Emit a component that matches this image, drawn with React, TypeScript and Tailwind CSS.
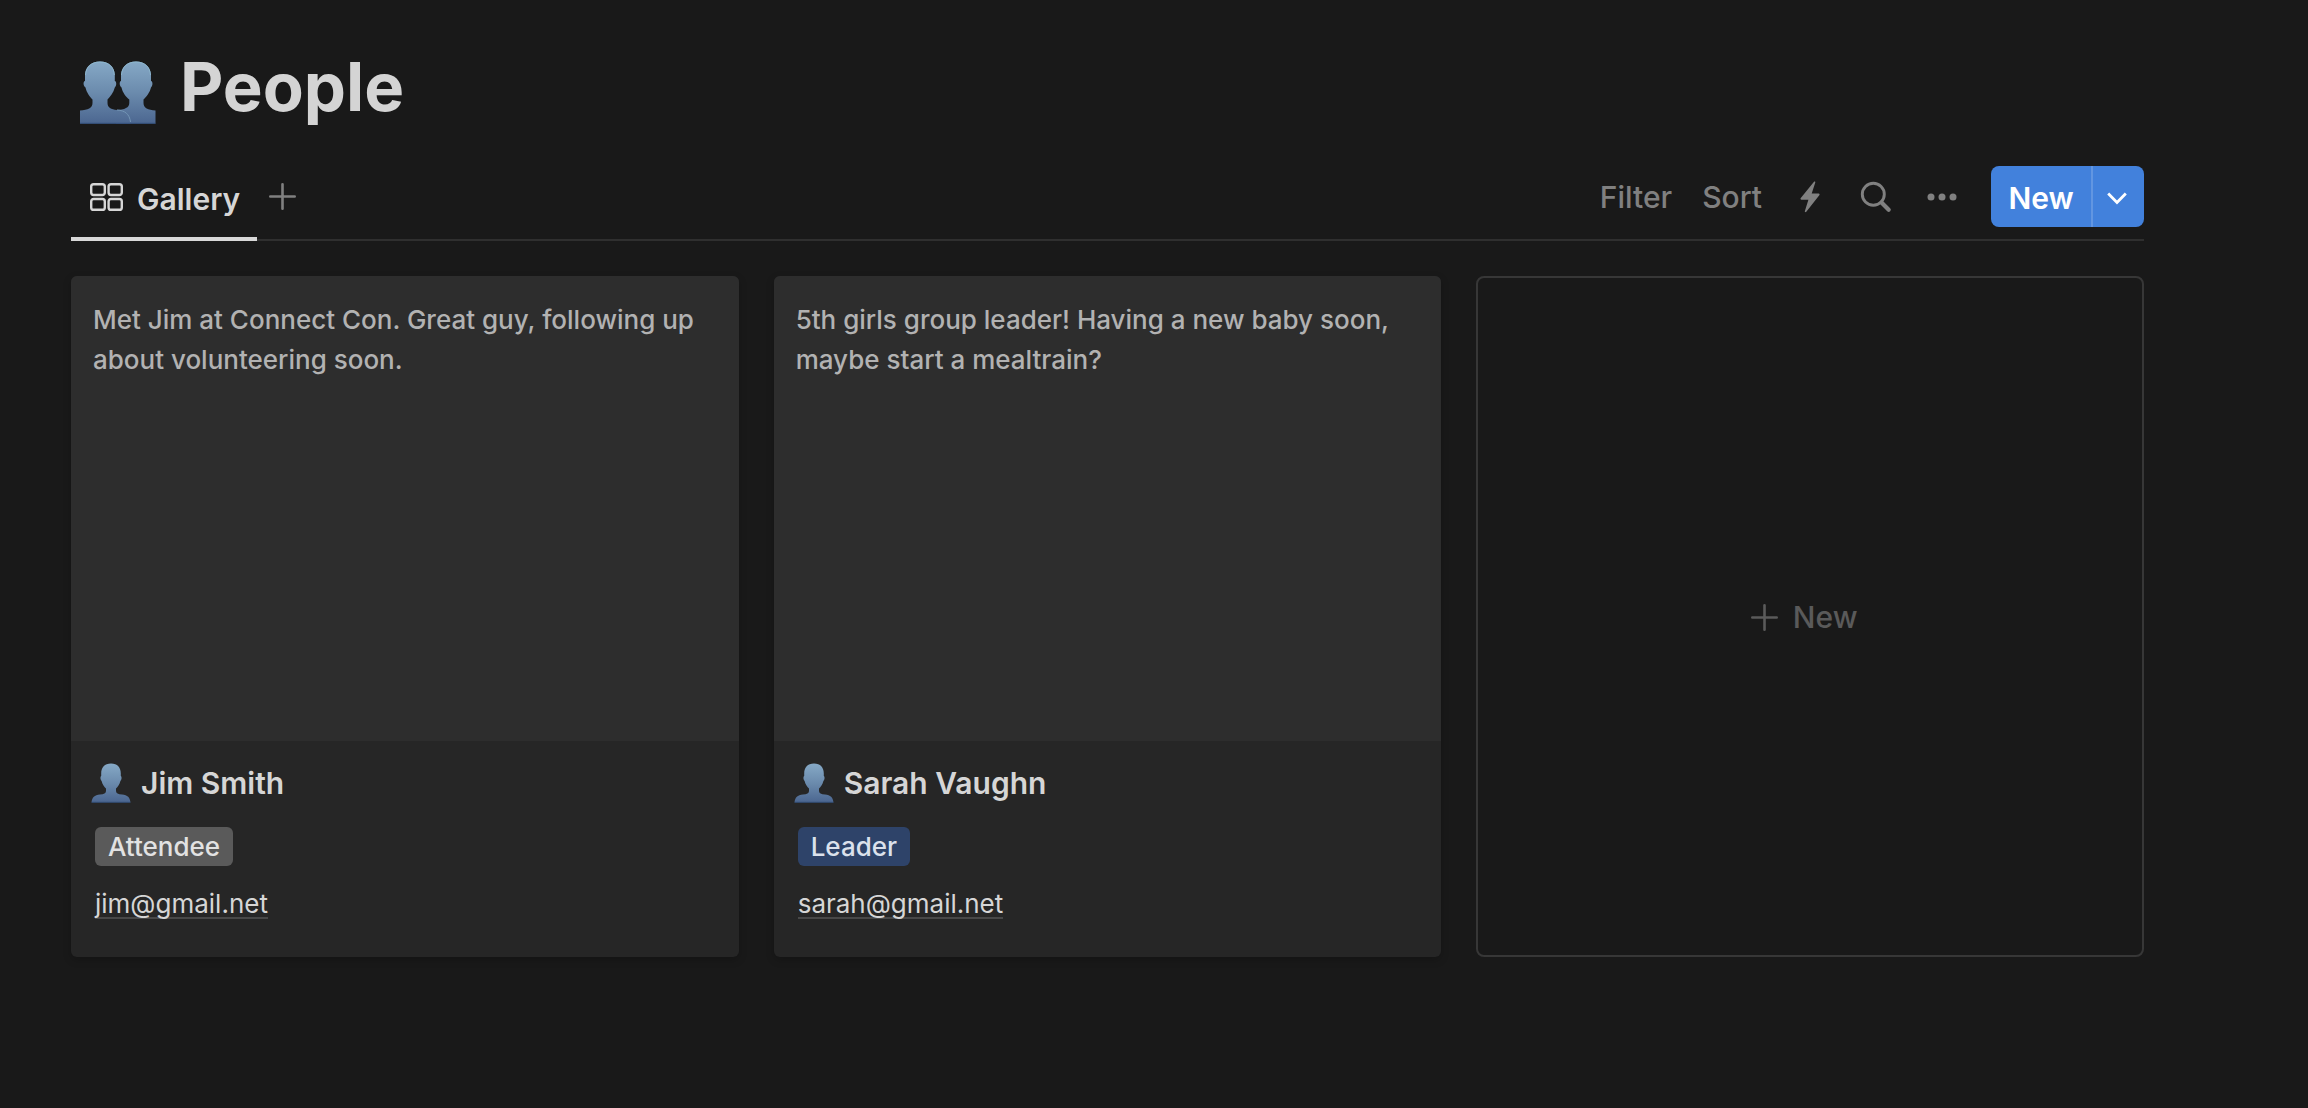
import React from "react";

function PersonIcon() {
  return (
    <svg viewBox="0 0 40 40" className="h-10 w-10 shrink-0" aria-hidden="true">
      <defs>
        <linearGradient id="person" x1="0" y1="0" x2="0" y2="1">
          <stop offset="0" stopColor="#86a9c6" />
          <stop offset="0.5" stopColor="#6b8bad" />
          <stop offset="1" stopColor="#4b6690" />
        </linearGradient>
      </defs>
      <path
        d="M20 0.500 C26.500 0.500 29.800 4.500 29.800 10.500 L29.800 13 C31 13.500 30.800 16.500 29.400 18 C28.600 21.500 26.600 24 25 25.500 L25 28 C25 30.500 27 31.300 31 31.600 C36.500 32.200 39 34.500 39.500 39.500 L0.500 39.500 C1 34.500 3.500 32.200 9 31.600 C13 31.300 15 30.500 15 28 L15 25.500 C13.400 24 11.400 21.500 10.600 18 C9.200 16.500 9 13.500 10.200 13 L10.200 10.500 C10.200 4.500 13.500 0.500 20 0.500 Z"
        fill="url(#person)"
      />
      <path d="M0.700 39.300 H39.300" stroke="#2f4a74" strokeWidth="0.800" />
    </svg>
  );
}

function PeopleIcon() {
  const left =
    "M20 0.500 C29 0.500 34.500 6 34.800 14 L34.800 20 C37 20.500 36.500 25 34.800 26.500 C33.500 31.500 30 36 27.500 38.500 L27.500 42 C27.500 46.500 31 48.500 37 49 C45 49.500 49.500 54 50.500 62.500 L0 62.500 L0 49.500 C8 49 12.500 47 12.500 42 L12.500 38.500 C10 36 6.500 31.500 5.500 26.500 C3.300 25 2.800 20.500 5 20 L5 14 C5.300 6 11 0.500 20 0.500 Z";
  const right =
    "M56 0.500 C65 0.500 70.500 6 71 14 L71 20 C73.200 20.500 72.700 25 71 26.500 C69.800 31.500 66.300 36 63.500 38.500 L63.500 42 C63.500 47 68 49 75.500 49.500 L75.500 62.500 L36 62.500 L36 49 C45 48.800 49.300 46.500 49.300 42 L49.300 38.500 C46 36 42.500 31.500 41.500 26.500 C39.500 25 39 20.500 41 20 L41 14 C41.500 6 47 0.500 56 0.500 Z";
  return (
    <svg viewBox="0 0 76 63" className="h-[63px] w-[76px] shrink-0" aria-hidden="true">
      <defs>
        <linearGradient id="people" gradientUnits="userSpaceOnUse" x1="0" y1="0" x2="0" y2="63">
          <stop offset="0" stopColor="#86a9c6" />
          <stop offset="0.5" stopColor="#6b8bad" />
          <stop offset="1" stopColor="#4b6690" />
        </linearGradient>
      </defs>
      <path d={right} fill="url(#people)" />
      <path d={left} fill="url(#people)" />
      <path d="M37 49 C45 49.500 49.500 53 50.500 61" fill="none" stroke="#7395b5" strokeWidth="1" />
      <path d="M0 62.300 H75.500" stroke="#35527e" strokeWidth="1" />
      <path
        d="M5.500 14 C6 6 11 1 20 1 C29 1 34 6 34.300 14 M41.500 14 C42 6 47 1 56 1 C65 1 70 6 70.500 14"
        fill="none"
        stroke="#8fb9cf"
        strokeWidth="0.900"
      />
    </svg>
  );
}

function GalleryIcon() {
  return (
    <svg viewBox="0 0 33 28" className="h-7 w-[33px]" fill="none" stroke="currentColor" strokeWidth="2.400" aria-hidden="true">
      <rect x="1.200" y="1.200" width="13.600" height="10.800" rx="2.400" />
      <rect x="18.600" y="1.200" width="13.200" height="10.800" rx="2.400" />
      <rect x="1.200" y="16" width="13.600" height="10.800" rx="2.400" />
      <rect x="18.600" y="16" width="13.200" height="10.800" rx="2.400" />
    </svg>
  );
}

function PlusIcon() {
  return (
    <svg viewBox="0 0 27 27" className="h-[27px] w-[27px]" fill="none" stroke="currentColor" strokeWidth="2.600" strokeLinecap="round" aria-hidden="true">
      <path d="M13.500 1.300 V25.700 M1.300 13.500 H25.700" />
    </svg>
  );
}

type Person = {
  name: string;
  note: string;
  role: string;
  tag: string;
  email: string;
};

const people: Person[] = [
  {
    name: "Jim Smith",
    note: "Met Jim at Connect Con. Great guy, following up about volunteering soon.",
    role: "Attendee",
    tag: "bg-[#5a5a5a] text-[#e2e2e2]",
    email: "jim@gmail.net",
  },
  {
    name: "Sarah Vaughn",
    note: "5th girls group leader! Having a new baby soon, maybe start a mealtrain?",
    role: "Leader",
    tag: "bg-[#2e4369] text-[#dbe1ec]",
    email: "sarah@gmail.net",
  },
];

function PersonCard({ person }: { person: Person }) {
  return (
    <article className="flex flex-col overflow-hidden rounded-md bg-[#262626] shadow-[0_3px_8px_rgba(0,0,0,0.2)]">
      <p className="h-[465px] bg-[#2d2d2d] px-[22px] pt-6 text-[26px] leading-10 font-medium text-[#b2b2b2]">{person.note}</p>
      <div className="px-6 pt-[22px] pb-[31px]">
        <h2 className="-ml-1 flex h-10 items-center gap-2.5 text-[30px] font-semibold text-[#d6d6d6]">
          <PersonIcon />
          {person.name}
        </h2>
        <div className="mt-6 flex">
          <span className={`h-[39px] rounded-md px-[13px] text-[26px] leading-[39px] font-medium ${person.tag}`}>{person.role}</span>
        </div>
        <div className="mt-5 flex h-10">
          <a href={`mailto:${person.email}`} className="h-[33px] border-b-2 border-[#484848] text-[26px] leading-9 text-[#d6d6d6]">
            {person.email}
          </a>
        </div>
      </div>
    </article>
  );
}

export default function App() {
  return (
    <main className="min-h-screen bg-[#191919] pt-[52px] pr-[164px] pl-[71px] font-['Inter',sans-serif]">
      <header className="flex h-20 items-center gap-6 pl-[9px]">
        <PeopleIcon />
        <h1 className="pb-3 text-[67px] leading-none font-bold text-[#d4d4d4]">People</h1>
      </header>

      <div className="mt-[34px] flex h-[75px] justify-between border-b-2 border-[#2f2f2f] text-[30px] font-medium">
        <div className="flex">
          <button type="button" className="-mb-0.5 flex items-start gap-3.5 border-b-4 border-[#d8d8d8] pr-[17px] pl-[19px] font-semibold text-[#d6d6d6]">
            <span className="pt-[17px]">
              <GalleryIcon />
            </span>
            <span className="leading-[66px]">Gallery</span>
          </button>
          <button type="button" aria-label="Add view" className="h-[61px] pl-3 text-[#808080]">
            <PlusIcon />
          </button>
        </div>
        <div className="flex h-[61px] items-center text-[#808080]">
          <button type="button" className="pt-0.5">Filter</button>
          <button type="button" className="ml-[30px] pt-0.5">Sort</button>
          <button type="button" aria-label="Automations" className="ml-[38px]">
            <svg viewBox="0 0 20 32" className="h-8 w-5" fill="currentColor" aria-hidden="true">
              <path d="M14 0.800 C14.800 0.200 15.600 0.800 15.200 1.800 L11.700 12.600 L18.600 12.600 C19.600 12.600 19.900 13.500 19.300 14.300 L6.300 30.800 C5.600 31.700 4.500 31.200 4.900 30.100 L8.400 18.700 L1.400 18.700 C0.500 18.700 0.200 17.800 0.800 17.100 Z" />
            </svg>
          </button>
          <button type="button" aria-label="Search" className="ml-10">
            <svg viewBox="0 0 32 32" className="h-8 w-8" fill="none" stroke="currentColor" aria-hidden="true">
              <circle cx="13.300" cy="13.300" r="11" strokeWidth="2.900" />
              <path d="M21.500 21.500 L28.700 28.800" strokeWidth="4.200" strokeLinecap="round" />
            </svg>
          </button>
          <button type="button" aria-label="More" className="ml-[35px]">
            <svg viewBox="0 0 30 8" className="h-2 w-[30px]" fill="currentColor" aria-hidden="true">
              <circle cx="4" cy="4" r="3.500" />
              <circle cx="15" cy="4" r="3.500" />
              <circle cx="26" cy="4" r="3.500" />
            </svg>
          </button>
          <div className="ml-[34px] flex h-[61px] overflow-hidden rounded-lg bg-[#4281dc] text-white">
            <button type="button" className="w-[100px] pt-[3px] font-semibold">New</button>
            <button type="button" aria-label="New options" className="flex w-[53px] items-center justify-center border-l-2 border-[#6296e1] pt-1 pr-1">
              <svg viewBox="0 0 20 13" className="h-[13px] w-5" fill="none" stroke="currentColor" strokeWidth="2.800" aria-hidden="true">
                <path d="M1.200 1.500 L10 10.500 L18.800 1.500" />
              </svg>
            </button>
          </div>
        </div>
      </div>

      <section className="mt-[35px] grid grid-cols-3 gap-[35px]">
        {people.map((person) => (
          <PersonCard key={person.email} person={person} />
        ))}
        <button type="button" className="flex items-center justify-center gap-[15px] rounded-lg border-2 border-[#373737] pt-0.5 pr-3 text-[30px] font-medium text-[#5a5a5a]">
          <PlusIcon />
          New
        </button>
      </section>
    </main>
  );
}
